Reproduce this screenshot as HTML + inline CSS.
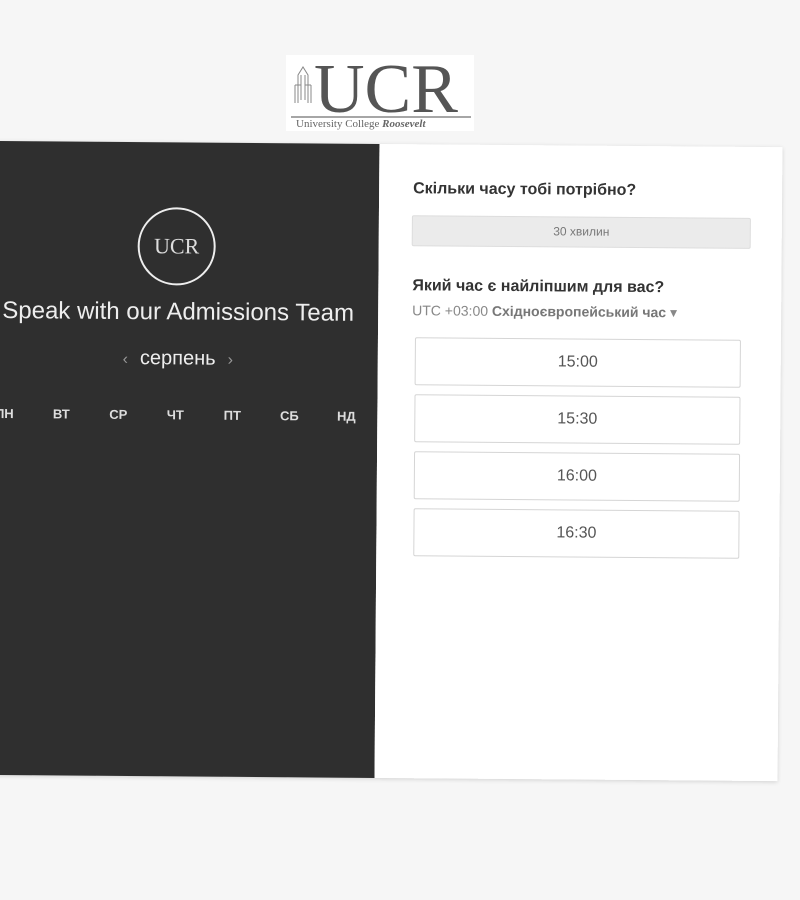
<!DOCTYPE html>
<html><head><meta charset="utf-8"><style>
body{margin:0;width:800px;height:900px;background:#f6f6f6;overflow:hidden;position:relative;font-family:"Liberation Sans",sans-serif}
.logo{position:absolute;left:286px;top:55px;width:188px;height:76px;background:#fff}
.card{position:absolute;left:-6px;top:144px;width:786px;height:634px;transform:rotate(0.45deg);transform-origin:389px 317px;box-shadow:0 1px 4px rgba(0,0,0,.15)}
.dark{position:absolute;left:0;top:0;width:383px;height:100%;background:#2f2f2f;color:#fff;text-align:center}
.white{position:absolute;left:383px;top:0;right:0;height:100%;background:#fff}
.circ{position:absolute;left:142px;top:65px;width:74px;height:74px;border:2px solid #eee;border-radius:50%;font-family:"Liberation Serif",serif;font-size:22px;line-height:74px;color:#ddd}
.t{position:absolute;left:0;width:366px;top:156px;font-size:24px;color:#eee}
.m{position:absolute;left:0;width:366px;top:205px;font-size:20px;color:#eee}
.m span{color:#999;font-size:16px;margin:0 12px}
.days{position:absolute;top:265px;left:0;font-size:13px;font-weight:bold;color:#ddd}
.days b{position:absolute;width:40px;text-align:center}
h3{position:absolute;left:34px;margin:0;font-size:16px;color:#333}
.btn{position:absolute;left:33px;width:337px;height:29px;background:#ebebeb;border:1px solid #ddd;border-radius:2px;font-size:12px;color:#777;text-align:center;line-height:29px}
.tz{position:absolute;left:34px;top:158px;font-size:14px;color:#888}
.tz b{color:#777}
.slot{position:absolute;left:37px;width:324px;height:46px;border:1px solid #d5d5d5;border-radius:2px;text-align:center;line-height:46px;font-size:16px;color:#555}
</style></head><body>
<div class="logo"><svg width="188" height="76"><g stroke="#888" fill="none"><path d="M12 48V20l5-8 5 8v28M15 20v25M19 20v25M9 30h6M19 30h6M9 30v18M25 30v18"/><path d="M5 62h180" stroke-width="1.5"/></g><text x="28" y="57" font-family="Liberation Serif" font-size="70" fill="#555">UCR</text><text x="10" y="72" font-family="Liberation Serif" font-size="11" fill="#666">University College <tspan font-style="italic" font-weight="bold">Roosevelt</tspan></text></svg></div>
<div class="card">
<div class="dark">
<div class="circ">UCR</div>
<div class="t">Speak with our Admissions Team</div>
<div class="m"><span>‹</span>серпень<span>›</span></div>
<div class="days"><b style="left:-10px">ПН</b><b style="left:47px">ВТ</b><b style="left:104px">СР</b><b style="left:161px">ЧТ</b><b style="left:218px">ПТ</b><b style="left:275px">СБ</b><b style="left:332px">НД</b></div>
</div>
<div class="white">
<h3 style="top:36px">Скільки часу тобі потрібно?</h3>
<div class="btn" style="top:71px">30 хвилин</div>
<h3 style="top:133px">Який час є найліпшим для вас?</h3>
<div class="tz">UTC +03:00 <b>Східноєвропейський час</b> ▾</div>
<div class="slot" style="top:193px">15:00</div>
<div class="slot" style="top:250px">15:30</div>
<div class="slot" style="top:307px">16:00</div>
<div class="slot" style="top:364px">16:30</div>
</div>
</div>
</body></html>
